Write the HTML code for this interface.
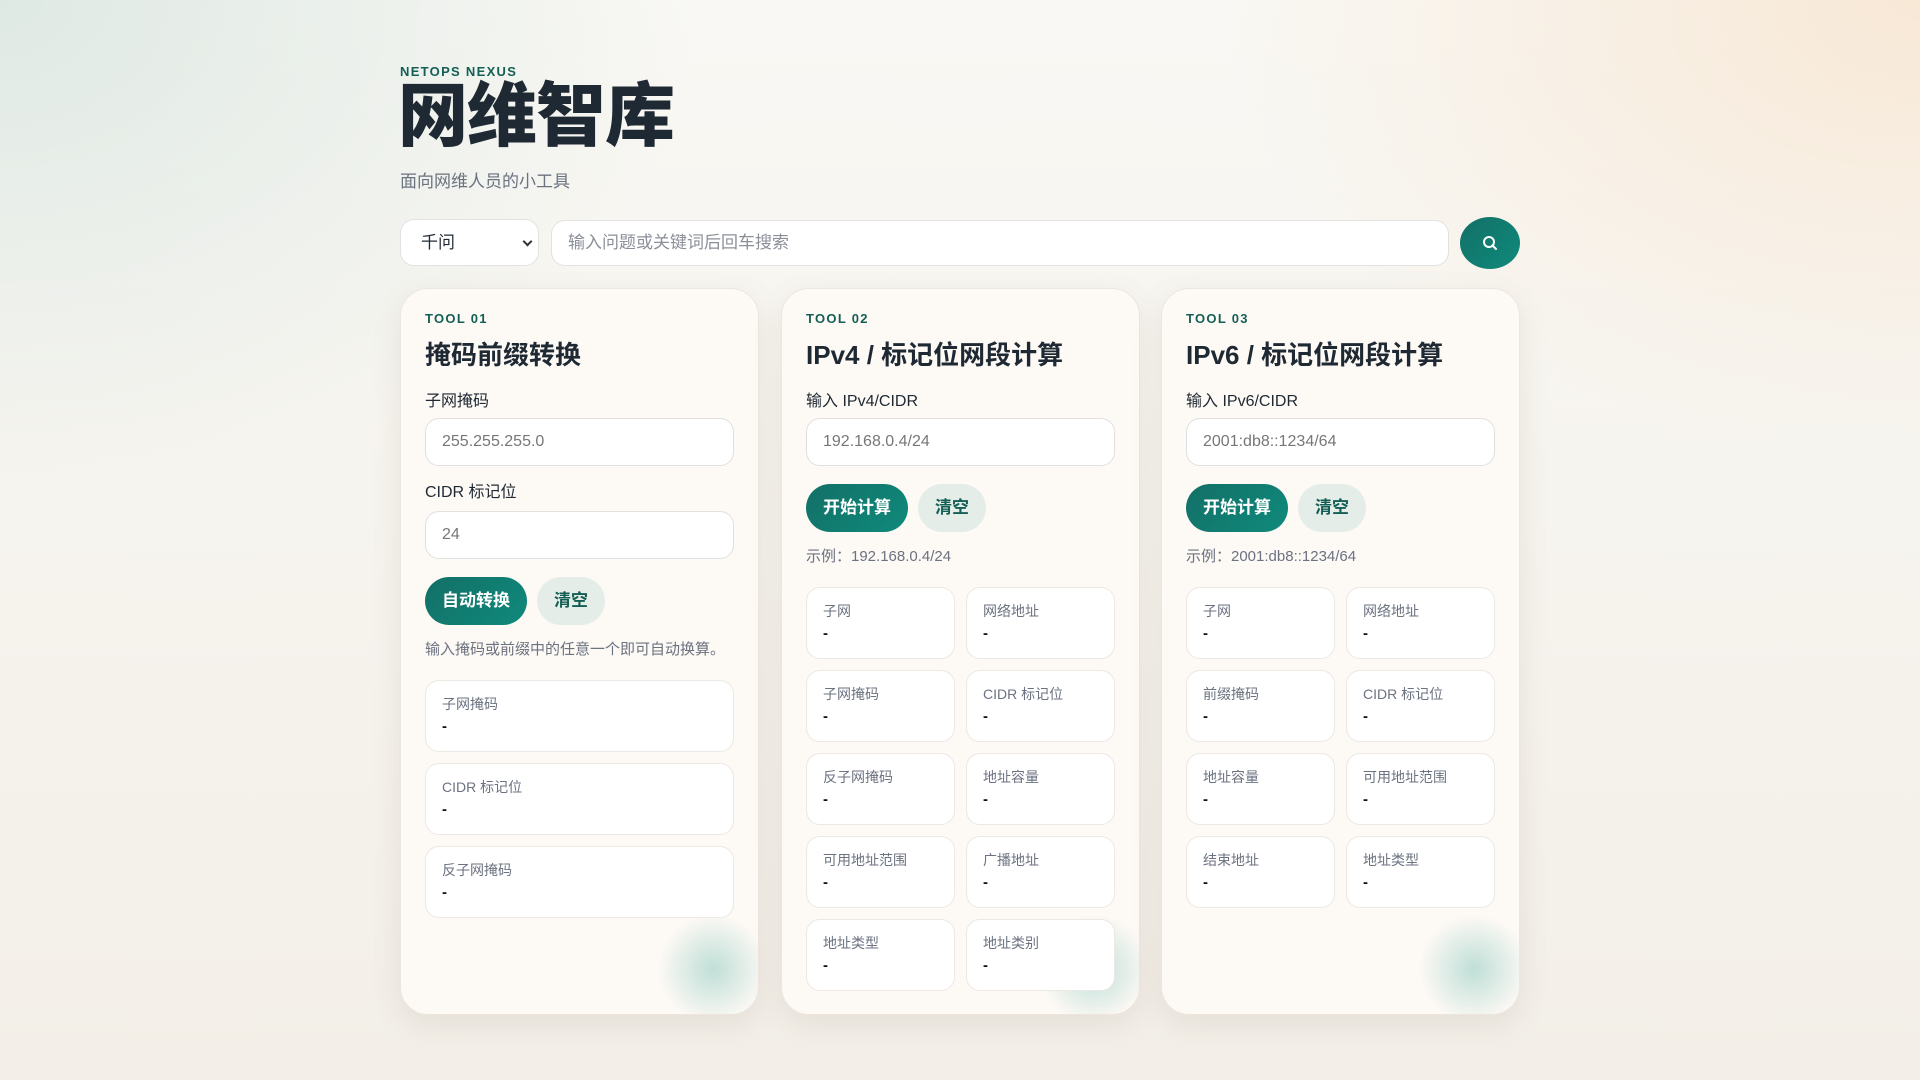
<!DOCTYPE html>
<html><head><meta charset="utf-8"><style>
*{box-sizing:border-box;margin:0;padding:0}
body{width:1920px;height:1080px;overflow:hidden;font-family:"Liberation Sans","Noto Sans CJK SC",sans-serif;color:#1f2933;
background:radial-gradient(ellipse 700px 500px at 0% 0%,#dfe9e4 0%,rgba(223,233,228,0) 100%),radial-gradient(ellipse 700px 450px at 100% 0%,#f8e8d6 0%,rgba(248,232,214,0) 100%),linear-gradient(180deg,#f9f8f4 0%,#f3efe8 100%);position:relative}
.abs{position:absolute}
.brand{left:400px;top:64px;font-size:13px;font-weight:700;letter-spacing:1.3px;color:#145f55}
h1{position:absolute;left:398px;top:74px;font-size:70px;font-weight:900;letter-spacing:-1px;line-height:84px;color:#1f2933}
.sub{left:400px;top:167px;font-size:17px;color:#6b7280}
.sel{left:400px;top:219px;width:139px;height:47px;background:#fff;border:1px solid #e2e2e2;border-radius:14px;font-size:17px;padding:0 0 0 20px;line-height:45px}
.sel:after{content:"";position:absolute;right:7px;top:18px;width:5px;height:5px;border-right:2px solid #333;border-bottom:2px solid #333;transform:rotate(45deg)}
.inp{left:551px;top:220px;width:898px;height:46px;background:#fff;border:1px solid #e2e2e2;border-radius:14px;font-size:17px;color:#8a8f98;padding-left:16px;line-height:44px}
.sbtn{left:1460px;top:217px;width:60px;height:52px;border-radius:50%;background:linear-gradient(135deg,#136f66,#0f8a7c)}
.card{position:absolute;top:288px;width:359px;height:727px;background:#fdf9f5;border:1px solid #ece6de;border-radius:28px;box-shadow:0 10px 30px rgba(120,100,80,.12);padding:22px 24px;overflow:hidden}
.card:after{content:"";position:absolute;right:-10px;bottom:-10px;width:110px;height:110px;border-radius:50%;background:radial-gradient(circle,rgba(150,205,195,.6),rgba(150,205,195,0) 70%)}
.tag{font-size:13px;font-weight:700;letter-spacing:1.3px;color:#145f55;line-height:16px}
.ct{font-size:26px;font-weight:700;margin-top:12px;line-height:32px}
.lb{font-size:16px;margin-top:21px;line-height:20px}
.lb2{margin-top:17px}
.fi{height:48px;background:#fff;border:1px solid #e0e0e0;border-radius:14px;margin-top:6px;font-size:16px;color:#777;padding-left:16px;line-height:46px}
.lb2+.fi{margin-top:8px}
.btns{display:flex;gap:10px;margin-top:18px}
.b1{height:48px;border-radius:24px;background:linear-gradient(135deg,#136f66,#0f8a7c);color:#fff;font-weight:700;font-size:17px;line-height:48px;padding:0 17px}
.b2{height:48px;border-radius:24px;background:#e5ede8;color:#145f55;font-weight:700;font-size:17px;line-height:48px;padding:0 17px}
.hint{font-size:15px;color:#6b7280;margin-top:15px;line-height:20px}
.box{height:72px;background:#fff;border:1px solid #ece8e3;border-radius:14px;padding:14px 16px;position:relative;z-index:1}
.box .l{font-size:14px;color:#6b7280;line-height:18px}
.box .v{font-size:15px;font-weight:700;line-height:20px;margin-top:4px;color:#111}
.g1{display:flex;flex-direction:column;gap:11px;margin-top:20px}
.g2{display:grid;grid-template-columns:149px 149px;gap:11px 11px;margin-top:20px}
</style></head><body>
<div class="abs brand">NETOPS NEXUS</div>
<h1>网维智库</h1>
<div class="abs sub">面向网维人员的小工具</div>
<div class="abs sel">千问</div>
<div class="abs inp">输入问题或关键词后回车搜索</div>
<div class="abs sbtn"><svg width="60" height="52" viewBox="0 0 60 52"><circle cx="29" cy="25" r="5" fill="none" stroke="#fff" stroke-width="2"/><path d="M32.5 28.5L36 32" stroke="#fff" stroke-width="2" stroke-linecap="round"/></svg></div>

<div class="card" style="left:400px">
<div class="tag">TOOL 01</div>
<div class="ct">掩码前缀转换</div>
<div class="lb">子网掩码</div>
<div class="fi">255.255.255.0</div>
<div class="lb lb2">CIDR 标记位</div>
<div class="fi">24</div>
<div class="btns"><div class="b1">自动转换</div><div class="b2">清空</div></div>
<div class="hint">输入掩码或前缀中的任意一个即可自动换算。</div>
<div class="g1">
<div class="box"><div class="l">子网掩码</div><div class="v">-</div></div>
<div class="box"><div class="l">CIDR 标记位</div><div class="v">-</div></div>
<div class="box"><div class="l">反子网掩码</div><div class="v">-</div></div>
</div></div>

<div class="card" style="left:781px">
<div class="tag">TOOL 02</div>
<div class="ct">IPv4 / 标记位网段计算</div>
<div class="lb">输入 IPv4/CIDR</div>
<div class="fi">192.168.0.4/24</div>
<div class="btns"><div class="b1">开始计算</div><div class="b2">清空</div></div>
<div class="hint">示例：192.168.0.4/24</div>
<div class="g2">
<div class="box"><div class="l">子网</div><div class="v">-</div></div>
<div class="box"><div class="l">网络地址</div><div class="v">-</div></div>
<div class="box"><div class="l">子网掩码</div><div class="v">-</div></div>
<div class="box"><div class="l">CIDR 标记位</div><div class="v">-</div></div>
<div class="box"><div class="l">反子网掩码</div><div class="v">-</div></div>
<div class="box"><div class="l">地址容量</div><div class="v">-</div></div>
<div class="box"><div class="l">可用地址范围</div><div class="v">-</div></div>
<div class="box"><div class="l">广播地址</div><div class="v">-</div></div>
<div class="box"><div class="l">地址类型</div><div class="v">-</div></div>
<div class="box"><div class="l">地址类别</div><div class="v">-</div></div>
</div></div>

<div class="card" style="left:1161px">
<div class="tag">TOOL 03</div>
<div class="ct">IPv6 / 标记位网段计算</div>
<div class="lb">输入 IPv6/CIDR</div>
<div class="fi">2001:db8::1234/64</div>
<div class="btns"><div class="b1">开始计算</div><div class="b2">清空</div></div>
<div class="hint">示例：2001:db8::1234/64</div>
<div class="g2">
<div class="box"><div class="l">子网</div><div class="v">-</div></div>
<div class="box"><div class="l">网络地址</div><div class="v">-</div></div>
<div class="box"><div class="l">前缀掩码</div><div class="v">-</div></div>
<div class="box"><div class="l">CIDR 标记位</div><div class="v">-</div></div>
<div class="box"><div class="l">地址容量</div><div class="v">-</div></div>
<div class="box"><div class="l">可用地址范围</div><div class="v">-</div></div>
<div class="box"><div class="l">结束地址</div><div class="v">-</div></div>
<div class="box"><div class="l">地址类型</div><div class="v">-</div></div>
</div></div>
</body></html>
